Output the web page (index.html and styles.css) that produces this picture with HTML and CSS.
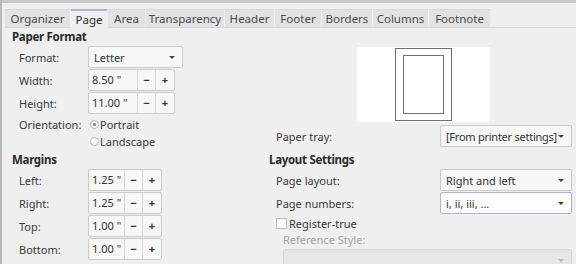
FILE: index.html
```html
<!DOCTYPE html>
<html>
<head>
<meta charset="utf-8">
<link rel="stylesheet" href="styles.css">
</head>
<body>
<div class="window">
  <div class="topbar"></div>
  <div class="tabs">
    <div class="tab t-org">Organizer</div>
    <div class="tab active t-page">Page</div>
    <div class="tab t-area">Area</div>
    <div class="tab t-trans">Transparency</div>
    <div class="tab t-head">Header</div>
    <div class="tab t-foot">Footer</div>
    <div class="tab t-bord">Borders</div>
    <div class="tab t-col">Columns</div>
    <div class="tab t-fn">Footnote</div>
  </div>
  <div class="panel">
    <div class="col left">
      <div class="heading">Paper Format</div>
      <div class="row">
        <span class="label">Format:</span>
        <div class="select fmt"><span>Letter</span><span class="arrow"></span></div>
      </div>
      <div class="row">
        <span class="label">Width:</span>
        <div class="spin"><span class="val wide">8.50 "</span><span class="btn">−</span><span class="btn">+</span></div>
      </div>
      <div class="row">
        <span class="label">Height:</span>
        <div class="spin"><span class="val wide">11.00 "</span><span class="btn">−</span><span class="btn">+</span></div>
      </div>
      <div class="radio-row first">
        <span class="label">Orientation:</span>
        <span class="radio checked"></span><span>Portrait</span>
      </div>
      <div class="radio-row">
        <span class="label"></span>
        <span class="radio"></span><span>Landscape</span>
      </div>
      <div class="heading mhead">Margins</div>
      <div class="row">
        <span class="label">Left:</span>
        <div class="spin"><span class="val">1.25 "</span><span class="btn">−</span><span class="btn">+</span></div>
      </div>
      <div class="row">
        <span class="label">Right:</span>
        <div class="spin"><span class="val">1.25 "</span><span class="btn">−</span><span class="btn">+</span></div>
      </div>
      <div class="row">
        <span class="label">Top:</span>
        <div class="spin"><span class="val">1.00 "</span><span class="btn">−</span><span class="btn">+</span></div>
      </div>
      <div class="row">
        <span class="label">Bottom:</span>
        <div class="spin"><span class="val">1.00 "</span><span class="btn">−</span><span class="btn">+</span></div>
      </div>
    </div>
    <div class="col right">
      <div class="preview">
        <svg width="133" height="75" viewBox="0 0 133 75">
          <rect x="0" y="0" width="133" height="75" fill="#ffffff"/>
          <rect x="38.5" y="1.5" width="56" height="72" fill="none" stroke="#6e6e6e" stroke-width="1"/>
          <rect x="46.5" y="8.5" width="40" height="58" fill="none" stroke="#6e6e6e" stroke-width="1"/>
        </svg>
      </div>
      <div class="row rrow tray">
        <span class="rlabel">Paper tray:</span>
        <div class="select rsel"><span class="tight">[From printer settings]</span><span class="arrow"></span></div>
      </div>
      <div class="heading">Layout Settings</div>
      <div class="row rrow">
        <span class="rlabel">Page layout:</span>
        <div class="select rsel"><span>Right and left</span><span class="arrow"></span></div>
      </div>
      <div class="row rrow">
        <span class="rlabel">Page numbers:</span>
        <div class="select rsel focus"><span>i, ii, iii, ...</span><span class="arrow"></span></div>
      </div>
      <div class="check-row">
        <span class="checkbox"></span><span>Register-true</span>
      </div>
      <div class="ref-label">Reference Style:</div>
      <div class="select disabled"><span></span><span class="arrow"></span></div>
    </div>
  </div>
</div>
</body>
</html>
```

FILE: styles.css
```css
* { box-sizing: border-box; }
html, body {
  margin: 0;
  padding: 0;
  width: 576px;
  height: 264px;
  overflow: hidden;
  background: #efefef;
}
body {
  font-family: "Noto Sans", "DejaVu Sans", sans-serif;
  font-size: 11px;
  color: #383838;
}
.window {
  height: 264px;
  border-left: 2px solid #b9b9b9;
  background: #efefef;
}
.topbar {
  height: 3px;
  background: #c9c9c9;
}
.tabs {
  display: flex;
  margin-top: 6px;
  margin-left: 3px;
  height: 19px;
  border-bottom: 1px solid #d9d9d9;
}
.tab {
  height: 18px;
  line-height: 18px;
  font-size: 11.5px;
  background: #e2e2e2;
  border-right: 1px solid #efefef;
  border-top: 1px solid #d8d8d8;
  text-align: center;
  color: #4a4a4a;
  white-space: nowrap;
}
.tab.active {
  background: #efefef;
  border-top: 2px solid #b7aee6;
  line-height: 17px;
  height: 19px;
  color: #2e2e2e;
}
.t-org { width: 66px; }
.t-page { width: 37px; }
.t-area { width: 38px; }
.t-trans { width: 79px; }
.t-head { width: 50px; }
.t-foot { width: 47px; }
.t-bord { width: 51px; }
.t-col { width: 56px; }
.t-fn { width: 62px; }

.panel {
  display: grid;
  grid-template-columns: 257px 1fr;
}
.col {
  display: flex;
  flex-direction: column;
}
.left { padding-left: 10px; }
.right { padding-left: 10px; }
.heading {
  height: 18px;
  line-height: 18px;
  font-weight: bold;
  font-size: 11.5px;
  letter-spacing: -0.3px;
  color: #2a2a2a;
}
.mhead { margin-top: 1px; }
.row {
  display: flex;
  align-items: center;
  height: 22px;
  margin-bottom: 1px;
  padding-left: 7px;
  white-space: nowrap;
}
.label {
  width: 69px;
  flex: none;
}
.select {
  display: flex;
  align-items: center;
  justify-content: space-between;
  height: 22px;
  border: 1px solid #cbcbcb;
  border-radius: 2px;
  background: #f7f7f7;
  padding: 0 7px 0 5px;
  color: #333;
  white-space: nowrap;
}
.tight { letter-spacing: -0.25px; }
.fmt { width: 95px; }
.arrow {
  flex: none;
  width: 0;
  height: 0;
  border-left: 3px solid transparent;
  border-right: 3px solid transparent;
  border-top: 3px solid #444;
}
.spin {
  display: flex;
  height: 22px;
  border: 1px solid #cbcbcb;
  border-radius: 2px;
  background: #f7f7f7;
}
.val {
  width: 36px;
  padding-left: 3px;
  line-height: 20px;
  border-right: 1px solid #d6d6d6;
  color: #333;
}
.val.wide { width: 49px; }
.btn {
  width: 18px;
  line-height: 20px;
  text-align: center;
  font-weight: bold;
  color: #333;
  border-right: 1px solid #d6d6d6;
}
.btn:last-child { border-right: none; }
.radio-row {
  display: flex;
  align-items: center;
  height: 17px;
  padding-left: 7px;
}
.radio-row.first { margin-top: 1px; }
.radio {
  width: 9px;
  height: 9px;
  border: 1px solid #b4b4b4;
  border-radius: 50%;
  background: #fdfdfd;
  margin: 0 1px 0 2px;
  display: flex;
  align-items: center;
  justify-content: center;
}
.radio.checked::after {
  content: "";
  width: 3px;
  height: 3px;
  border-radius: 50%;
  background: #777;
}
.preview {
  height: 97px;
  padding-top: 19px;
  padding-left: 88px;
  display: flex;
}
.preview svg { display: block; }
.rrow { justify-content: space-between; padding-right: 4px; }
.tray { margin-bottom: 4px; }
.rlabel { width: 164px; }
.rsel { width: 132px; }
.focus {
  background: #ffffff;
  border-color: #b4aee0;
}
.check-row {
  display: flex;
  align-items: center;
  height: 16px;
  padding-left: 7px;
  margin-top: 0;
}
.checkbox {
  width: 11px;
  height: 11px;
  border: 1px solid #bdbdbd;
  background: #fdfdfd;
  margin-right: 2px;
}
.ref-label {
  height: 17px;
  line-height: 17px;
  padding-left: 14px;
  color: #a3a3a3;
}
.disabled {
  margin-left: 14px;
  margin-right: 4px;
  margin-top: 1px;
  height: 22px;
  background: #e6e6e6;
  border-color: #d6d6d6;
}
.disabled .arrow { border-top-color: #b5b5b5; }
```
